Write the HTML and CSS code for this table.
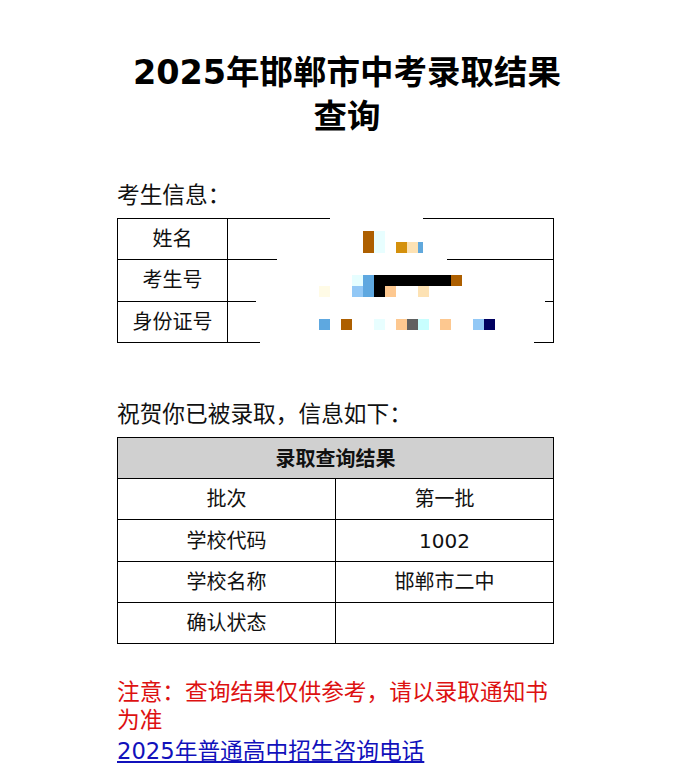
FILE: index.html
```html
<!DOCTYPE html>
<html lang="zh-CN">
<head>
<meta charset="utf-8">
<title>2025年邯郸市中考录取结果查询</title>
<link rel="stylesheet" href="styles.css">
</head>
<body>
<div class="page">
  <h1 class="title">2025年邯郸市中考录取结果查询</h1>
  <p class="label">考生信息：</p>
  <div class="table-wrap">
    <table class="grid info">
      <colgroup><col class="key-col"><col></colgroup>
      <tr><td>姓名</td><td></td></tr>
      <tr><td>考生号</td><td></td></tr>
      <tr><td>身份证号</td><td></td></tr>
    </table>
    <svg class="redact" viewBox="117 217 437 128" width="437" height="128" aria-hidden="true">
      <g fill="#fff">
        <rect x="330" y="216" width="93" height="4"/>
        <rect x="277" y="258" width="170" height="4"/>
        <rect x="256" y="299" width="289" height="4"/>
        <rect x="260" y="340" width="274" height="5"/>
      </g>
      <rect x="363" y="231" width="11" height="22" fill="#ad5f00"/>
      <rect x="374" y="231" width="11" height="22" fill="#e8feff"/>
      <rect x="396" y="242" width="11" height="11" fill="#d4900c"/>
      <rect x="407" y="242" width="11" height="11" fill="#fde2b4"/>
      <rect x="418" y="242" width="5" height="11" fill="#60a8dc"/>

      <rect x="352" y="275" width="11" height="11" fill="#e6feff"/>
      <rect x="363" y="275" width="11" height="22" fill="#5ea8e0"/>
      <rect x="374" y="275" width="77" height="11" fill="#000"/>
      <rect x="451" y="275" width="11" height="11" fill="#ad5f00"/>
      <rect x="352" y="286" width="11" height="11" fill="#92c8f6"/>
      <rect x="374" y="286" width="11" height="11" fill="#000"/>
      <rect x="385" y="286" width="11" height="11" fill="#fdc890"/>
      <rect x="418" y="286" width="11" height="11" fill="#fde2b4"/>
      <rect x="319" y="286" width="11" height="11" fill="#fffbe6"/>

      <rect x="319" y="319" width="11" height="11" fill="#5ea8e0"/>
      <rect x="341" y="319" width="11" height="11" fill="#ad5f00"/>
      <rect x="374" y="319" width="11" height="11" fill="#e8feff"/>
      <rect x="396" y="319" width="11" height="11" fill="#fdc890"/>
      <rect x="407" y="319" width="11" height="11" fill="#606060"/>
      <rect x="418" y="319" width="11" height="11" fill="#c8fefe"/>
      <rect x="440" y="319" width="11" height="11" fill="#fdc890"/>
      <rect x="473" y="319" width="11" height="11" fill="#92c8f6"/>
      <rect x="484" y="319" width="11" height="11" fill="#000060"/>
    </svg>
  </div>
  <p class="label congrats">祝贺你已被录取，信息如下：</p>
  <table class="grid result">
    <tr><th colspan="2">录取查询结果</th></tr>
    <tr><td>批次</td><td>第一批</td></tr>
    <tr><td>学校代码</td><td>1002</td></tr>
    <tr><td>学校名称</td><td>邯郸市二中</td></tr>
    <tr><td>确认状态</td><td></td></tr>
  </table>
  <p class="notice">注意：查询结果仅供参考，请以录取通知书为准</p>
  <a class="link" href="#">2025年普通高中招生咨询电话</a>
</div>
</body>
</html>
```
FILE: styles.css
```css
html, body {
  margin: 0;
  padding: 0;
  background: #fff;
}

body {
  font-family: "DejaVu Sans", "Noto Sans CJK SC", sans-serif;
  color: #111;
}

.page {
  width: 437px;
  margin: 0 auto;
  padding-right: 4px;
  padding-top: 51px;
}

.title {
  margin: 0 -23px 0 0;
  font-size: 33.5px;
  line-height: 44px;
  font-weight: bold;
  text-align: center;
  color: #000;
}

.label {
  margin: 40px 0 9px;
  font-family: "Noto Sans CJK SC", sans-serif;
  font-size: 22.7px;
  line-height: 30px;
  color: #111;
}

.congrats {
  margin-top: 55px;
}

.table-wrap {
  position: relative;
}

.grid {
  width: 437px;
  border-collapse: collapse;
  table-layout: fixed;
  font-family: "DejaVu Sans", "Noto Sans CJK SC", sans-serif;
  font-size: 20px;
}

.grid td,
.grid th {
  border: 1px solid #000;
  height: 40.3px;
  padding: 0;
  text-align: center;
  vertical-align: middle;
  line-height: 24px;
  color: #111;
}

.key-col {
  width: 110px;
}

.result th {
  background: #d0d0d0;
  font-weight: bold;
  font-family: "Noto Sans CJK SC", sans-serif;
}

.result td {
  width: 50%;
}

.redact {
  position: absolute;
  left: 0;
  top: -1px;
  display: block;
}

.notice {
  margin: 33px 0 0;
  font-family: "Noto Sans CJK SC", sans-serif;
  font-size: 22.7px;
  line-height: 28px;
  color: #dd1111;
}

.link {
  display: block;
  margin-top: 4px;
  font-size: 22.7px;
  line-height: 28px;
  color: #1111bb;
  text-decoration: underline;
}
```
